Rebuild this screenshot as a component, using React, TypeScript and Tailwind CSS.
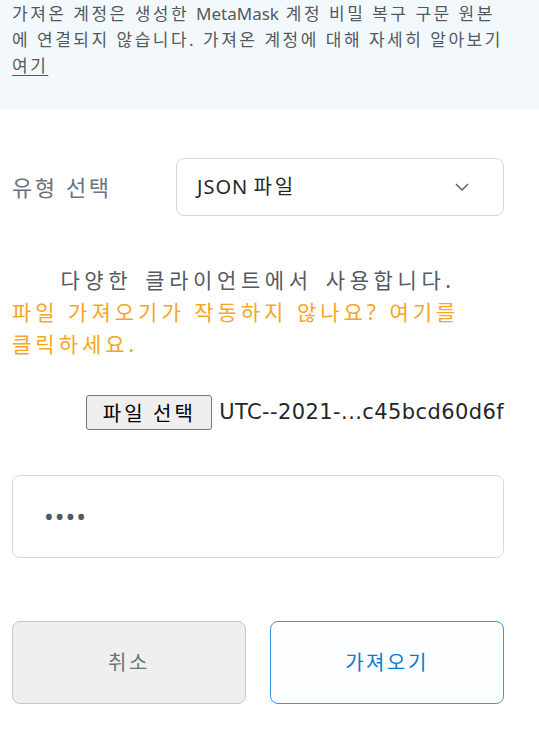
import React from "react";

export default function App() {
  const font = { fontFamily: '"Noto Sans", "Noto Sans CJK KR", sans-serif' };
  return (
    <div className="w-[539px] h-[730px] bg-white overflow-hidden" style={font}>
      <div className="h-[110px] bg-[#f3f8fc] px-[12px] pt-[1px]">
        <p className="text-[17px] leading-[26px] text-[#535a61] tracking-[2.5px] whitespace-nowrap">
          가져온 계정은 생성한 <span className="tracking-normal">MetaMask</span> 계정 비밀 복구 구문 원본
          <br />
          에 연결되지 않습니다. 가져온 계정에 대해 자세히 알아보기
          <br />
          <span className="underline underline-offset-[3px]">여기</span>
        </p>
      </div>
      <div className="mx-[12px] w-[492px]">
        <div className="mt-[48px] flex items-center h-[58px]">
          <div className="w-[164px] text-[22px] tracking-[2.6px] text-[#6a737d]">유형 선택</div>
          <div className="flex-1 h-[58px] border border-[#d6d9dc] rounded-[8px] flex items-center justify-between pl-[20px] pr-[33px]">
            <span className="text-[20px] text-[#24272a]">
              <span className="tracking-[1px]">JSON</span> <span className="tracking-[3px]">파일</span>
            </span>
            <svg width="16" height="10" viewBox="0 0 16 10" fill="none">
              <path d="M2 2l6 6 6-6" stroke="#5d6167" strokeWidth="1.5" />
            </svg>
          </div>
        </div>
        <div className="mt-[48px] text-[21px] leading-[32px] tracking-[4px] whitespace-nowrap">
          <div className="text-center text-[#535a61] tracking-[4.6px] [word-spacing:3px]">다양한 클라이언트에서 사용합니다.</div>
          <div className="text-[#f6a623]">
            파일 가져오기가 작동하지 않나요? 여기를
            <br />
            클릭하세요.
          </div>
        </div>
        <div className="mt-[35px] flex items-center justify-end h-[35px]">
          <button
            className="h-[35px] w-[126px] bg-[#efefef] border border-[#767676] rounded-[3px] text-[20px] tracking-[3px] text-black flex items-center justify-center"
            style={{ fontFamily: '"Noto Sans CJK KR", sans-serif' }}
          >
            파일 선택
          </button>
          <span
            className="ml-[7px] text-[21px] tracking-[0.4px] text-[#24272a] whitespace-nowrap"
            style={{ fontFamily: '"DejaVu Sans", sans-serif' }}
          >
            UTC--2021-...c45bcd60d6f
          </span>
        </div>
        <div className="mt-[45px] h-[83px] border border-[#d6d9dc] rounded-[8px] flex items-center pl-[31px]">
          <span className="text-[26px] tracking-[1px] text-[#535a61]">••••</span>
        </div>
        <div className="mt-[63px] flex gap-[24px]">
          <button className="flex-1 h-[83px] bg-[#efefef] border border-[#c8c8c8] rounded-[8px] text-[20px] tracking-[2.5px] text-[#6a737d]">
            취소
          </button>
          <button className="flex-1 h-[83px] bg-[#fcfeff] border border-[#3099e8] rounded-[8px] text-[20px] tracking-[2.5px] text-[#037dd6]">
            가져오기
          </button>
        </div>
      </div>
    </div>
  );
}
